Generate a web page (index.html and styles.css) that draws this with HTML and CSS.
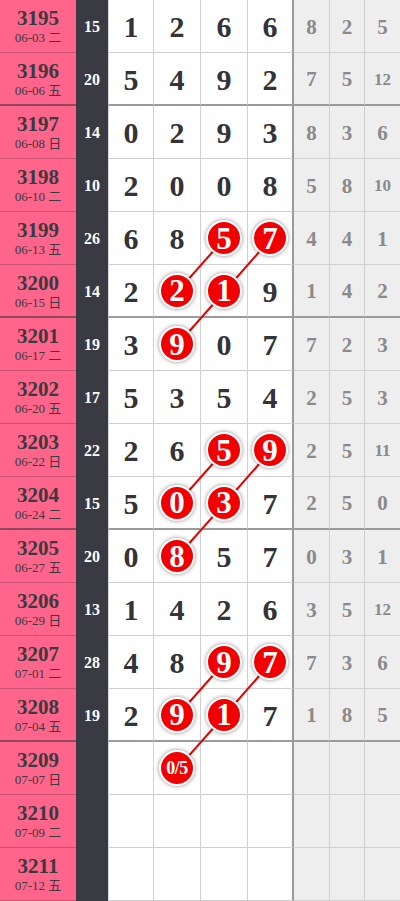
FILE: index.html
```html
<!DOCTYPE html>
<html>
<head>
<meta charset="utf-8">
<link rel="stylesheet" href="styles.css">
</head>
<body>
<div class="board">
  <svg class="links" width="400" height="901" viewBox="0 0 400 901">
    <g stroke="#e60000" stroke-width="2" fill="none">
      <polyline points="224.5,238.5 177.5,291.5"/>
      <polyline points="271,238.5 224.5,291.5 177.5,344.5"/>
      <polyline points="224.5,450.5 177.5,503.5"/>
      <polyline points="271,450.5 224.5,503.5 177.5,556.5"/>
      <polyline points="224.5,662.5 177.5,715.5"/>
      <polyline points="271,662.5 224.5,715.5 177.5,768.5"/>
    </g>
  </svg>

  <div class="row">
    <div class="c issue"><span class="no">3195</span><span class="date">06-03 二</span></div>
    <div class="c sum">15</div>
    <div class="c n first">1</div><div class="c n">2</div><div class="c n">6</div><div class="c n last">6</div>
    <div class="c g">8</div><div class="c g">2</div><div class="c g end">5</div>
  </div>
  <div class="row grp">
    <div class="c issue"><span class="no">3196</span><span class="date">06-06 五</span></div>
    <div class="c sum">20</div>
    <div class="c n first">5</div><div class="c n">4</div><div class="c n">9</div><div class="c n last">2</div>
    <div class="c g">7</div><div class="c g">5</div><div class="c g end small">12</div>
  </div>
  <div class="row">
    <div class="c issue"><span class="no">3197</span><span class="date">06-08 日</span></div>
    <div class="c sum">14</div>
    <div class="c n first">0</div><div class="c n">2</div><div class="c n">9</div><div class="c n last">3</div>
    <div class="c g">8</div><div class="c g">3</div><div class="c g end">6</div>
  </div>
  <div class="row">
    <div class="c issue"><span class="no">3198</span><span class="date">06-10 二</span></div>
    <div class="c sum">10</div>
    <div class="c n first">2</div><div class="c n">0</div><div class="c n">0</div><div class="c n last">8</div>
    <div class="c g">5</div><div class="c g">8</div><div class="c g end small">10</div>
  </div>
  <div class="row">
    <div class="c issue"><span class="no">3199</span><span class="date">06-13 五</span></div>
    <div class="c sum">26</div>
    <div class="c n first">6</div><div class="c n">8</div><div class="c n"><span class="ball">5</span></div><div class="c n last"><span class="ball">7</span></div>
    <div class="c g">4</div><div class="c g">4</div><div class="c g end">1</div>
  </div>
  <div class="row grp">
    <div class="c issue"><span class="no">3200</span><span class="date">06-15 日</span></div>
    <div class="c sum">14</div>
    <div class="c n first">2</div><div class="c n"><span class="ball">2</span></div><div class="c n"><span class="ball">1</span></div><div class="c n last">9</div>
    <div class="c g">1</div><div class="c g">4</div><div class="c g end">2</div>
  </div>
  <div class="row">
    <div class="c issue"><span class="no">3201</span><span class="date">06-17 二</span></div>
    <div class="c sum">19</div>
    <div class="c n first">3</div><div class="c n"><span class="ball">9</span></div><div class="c n">0</div><div class="c n last">7</div>
    <div class="c g">7</div><div class="c g">2</div><div class="c g end">3</div>
  </div>
  <div class="row">
    <div class="c issue"><span class="no">3202</span><span class="date">06-20 五</span></div>
    <div class="c sum">17</div>
    <div class="c n first">5</div><div class="c n">3</div><div class="c n">5</div><div class="c n last">4</div>
    <div class="c g">2</div><div class="c g">5</div><div class="c g end">3</div>
  </div>
  <div class="row">
    <div class="c issue"><span class="no">3203</span><span class="date">06-22 日</span></div>
    <div class="c sum">22</div>
    <div class="c n first">2</div><div class="c n">6</div><div class="c n"><span class="ball">5</span></div><div class="c n last"><span class="ball">9</span></div>
    <div class="c g">2</div><div class="c g">5</div><div class="c g end small">11</div>
  </div>
  <div class="row grp">
    <div class="c issue"><span class="no">3204</span><span class="date">06-24 二</span></div>
    <div class="c sum">15</div>
    <div class="c n first">5</div><div class="c n"><span class="ball">0</span></div><div class="c n"><span class="ball">3</span></div><div class="c n last">7</div>
    <div class="c g">2</div><div class="c g">5</div><div class="c g end">0</div>
  </div>
  <div class="row">
    <div class="c issue"><span class="no">3205</span><span class="date">06-27 五</span></div>
    <div class="c sum">20</div>
    <div class="c n first">0</div><div class="c n"><span class="ball">8</span></div><div class="c n">5</div><div class="c n last">7</div>
    <div class="c g">0</div><div class="c g">3</div><div class="c g end">1</div>
  </div>
  <div class="row">
    <div class="c issue"><span class="no">3206</span><span class="date">06-29 日</span></div>
    <div class="c sum">13</div>
    <div class="c n first">1</div><div class="c n">4</div><div class="c n">2</div><div class="c n last">6</div>
    <div class="c g">3</div><div class="c g">5</div><div class="c g end small">12</div>
  </div>
  <div class="row">
    <div class="c issue"><span class="no">3207</span><span class="date">07-01 二</span></div>
    <div class="c sum">28</div>
    <div class="c n first">4</div><div class="c n">8</div><div class="c n"><span class="ball">9</span></div><div class="c n last"><span class="ball">7</span></div>
    <div class="c g">7</div><div class="c g">3</div><div class="c g end">6</div>
  </div>
  <div class="row grp">
    <div class="c issue"><span class="no">3208</span><span class="date">07-04 五</span></div>
    <div class="c sum">19</div>
    <div class="c n first">2</div><div class="c n"><span class="ball">9</span></div><div class="c n"><span class="ball">1</span></div><div class="c n last">7</div>
    <div class="c g">1</div><div class="c g">8</div><div class="c g end">5</div>
  </div>
  <div class="row">
    <div class="c issue"><span class="no">3209</span><span class="date">07-07 日</span></div>
    <div class="c sum"></div>
    <div class="c n first"></div><div class="c n"><span class="ball frac">0/5</span></div><div class="c n"></div><div class="c n last"></div>
    <div class="c g"></div><div class="c g"></div><div class="c g end"></div>
  </div>
  <div class="row">
    <div class="c issue"><span class="no">3210</span><span class="date">07-09 二</span></div>
    <div class="c sum"></div>
    <div class="c n first"></div><div class="c n"></div><div class="c n"></div><div class="c n last"></div>
    <div class="c g"></div><div class="c g"></div><div class="c g end"></div>
  </div>
  <div class="row">
    <div class="c issue"><span class="no">3211</span><span class="date">07-12 五</span></div>
    <div class="c sum"></div>
    <div class="c n first"></div><div class="c n"></div><div class="c n"></div><div class="c n last"></div>
    <div class="c g"></div><div class="c g"></div><div class="c g end"></div>
  </div>
</div>
</body>
</html>
```

FILE: styles.css
```css
* { box-sizing: border-box; }
html, body { margin: 0; padding: 0; background: #fff; }
body {
  width: 400px;
  height: 901px;
  overflow: hidden;
  font-family: "Liberation Serif", "Noto Sans CJK SC", serif;
}
.board {
  position: relative;
  width: 400px;
}
.links {
  position: absolute;
  top: 0;
  left: 0;
  z-index: 1;
  pointer-events: none;
}
.row {
  display: grid;
  grid-template-columns: 76px 32px 46px 47px 47px 46px 36px 35px 35px;
  height: 53px;
}
.c {
  display: flex;
  align-items: center;
  justify-content: center;
  border-bottom: 1px solid #d0d0d0;
}
.row.grp .c { border-bottom: 2px solid #9a9a9a; }

.issue {
  flex-direction: column;
  background: #ff658b;
  color: #3a3a40;
  border-bottom-color: #c9506e;
  padding-top: 1px;
}
.row.grp .issue { border-bottom-color: #8e4a5c; }
.issue .no {
  font-size: 21px;
  font-weight: bold;
  line-height: 23px;
}
.issue .date {
  font-size: 13px;
  line-height: 16px;
}
.sum {
  background: #3a3a42;
  color: #fff;
  font-size: 16px;
  font-weight: bold;
  border-bottom-color: #3a3a42 !important;
  padding-top: 2px;
}
.n {
  background: #fff;
  color: #333338;
  font-size: 30px;
  font-weight: bold;
  border-right: 1px solid #d0d0d0;
  padding-top: 2px;
}
.n.first { border-left: 1px solid #d8d8d8; }
.n.last { border-right: 2px solid #9a9a9a; }
.g {
  background: #eeeeee;
  color: #8a8a8a;
  font-size: 21px;
  font-weight: bold;
  border-right: 1px solid #cfcfcf;
  padding-top: 2px;
}
.g.end { border-right: none; }
.g.small { font-size: 17px; }

.ball {
  position: relative;
  z-index: 2;
  width: 36px;
  height: 36px;
  flex: none;
  border-radius: 50%;
  background: #f00000;
  border: 2px solid #fff;
  box-shadow: 0 0 4px rgba(0, 0, 0, 0.45);
  color: #fff;
  font-size: 31px;
  font-weight: bold;
  display: flex;
  align-items: center;
  justify-content: center;
  line-height: 1;
  margin-top: -2px;
}
.ball.frac {
  font-size: 18px;
  letter-spacing: -0.5px;
}
```
